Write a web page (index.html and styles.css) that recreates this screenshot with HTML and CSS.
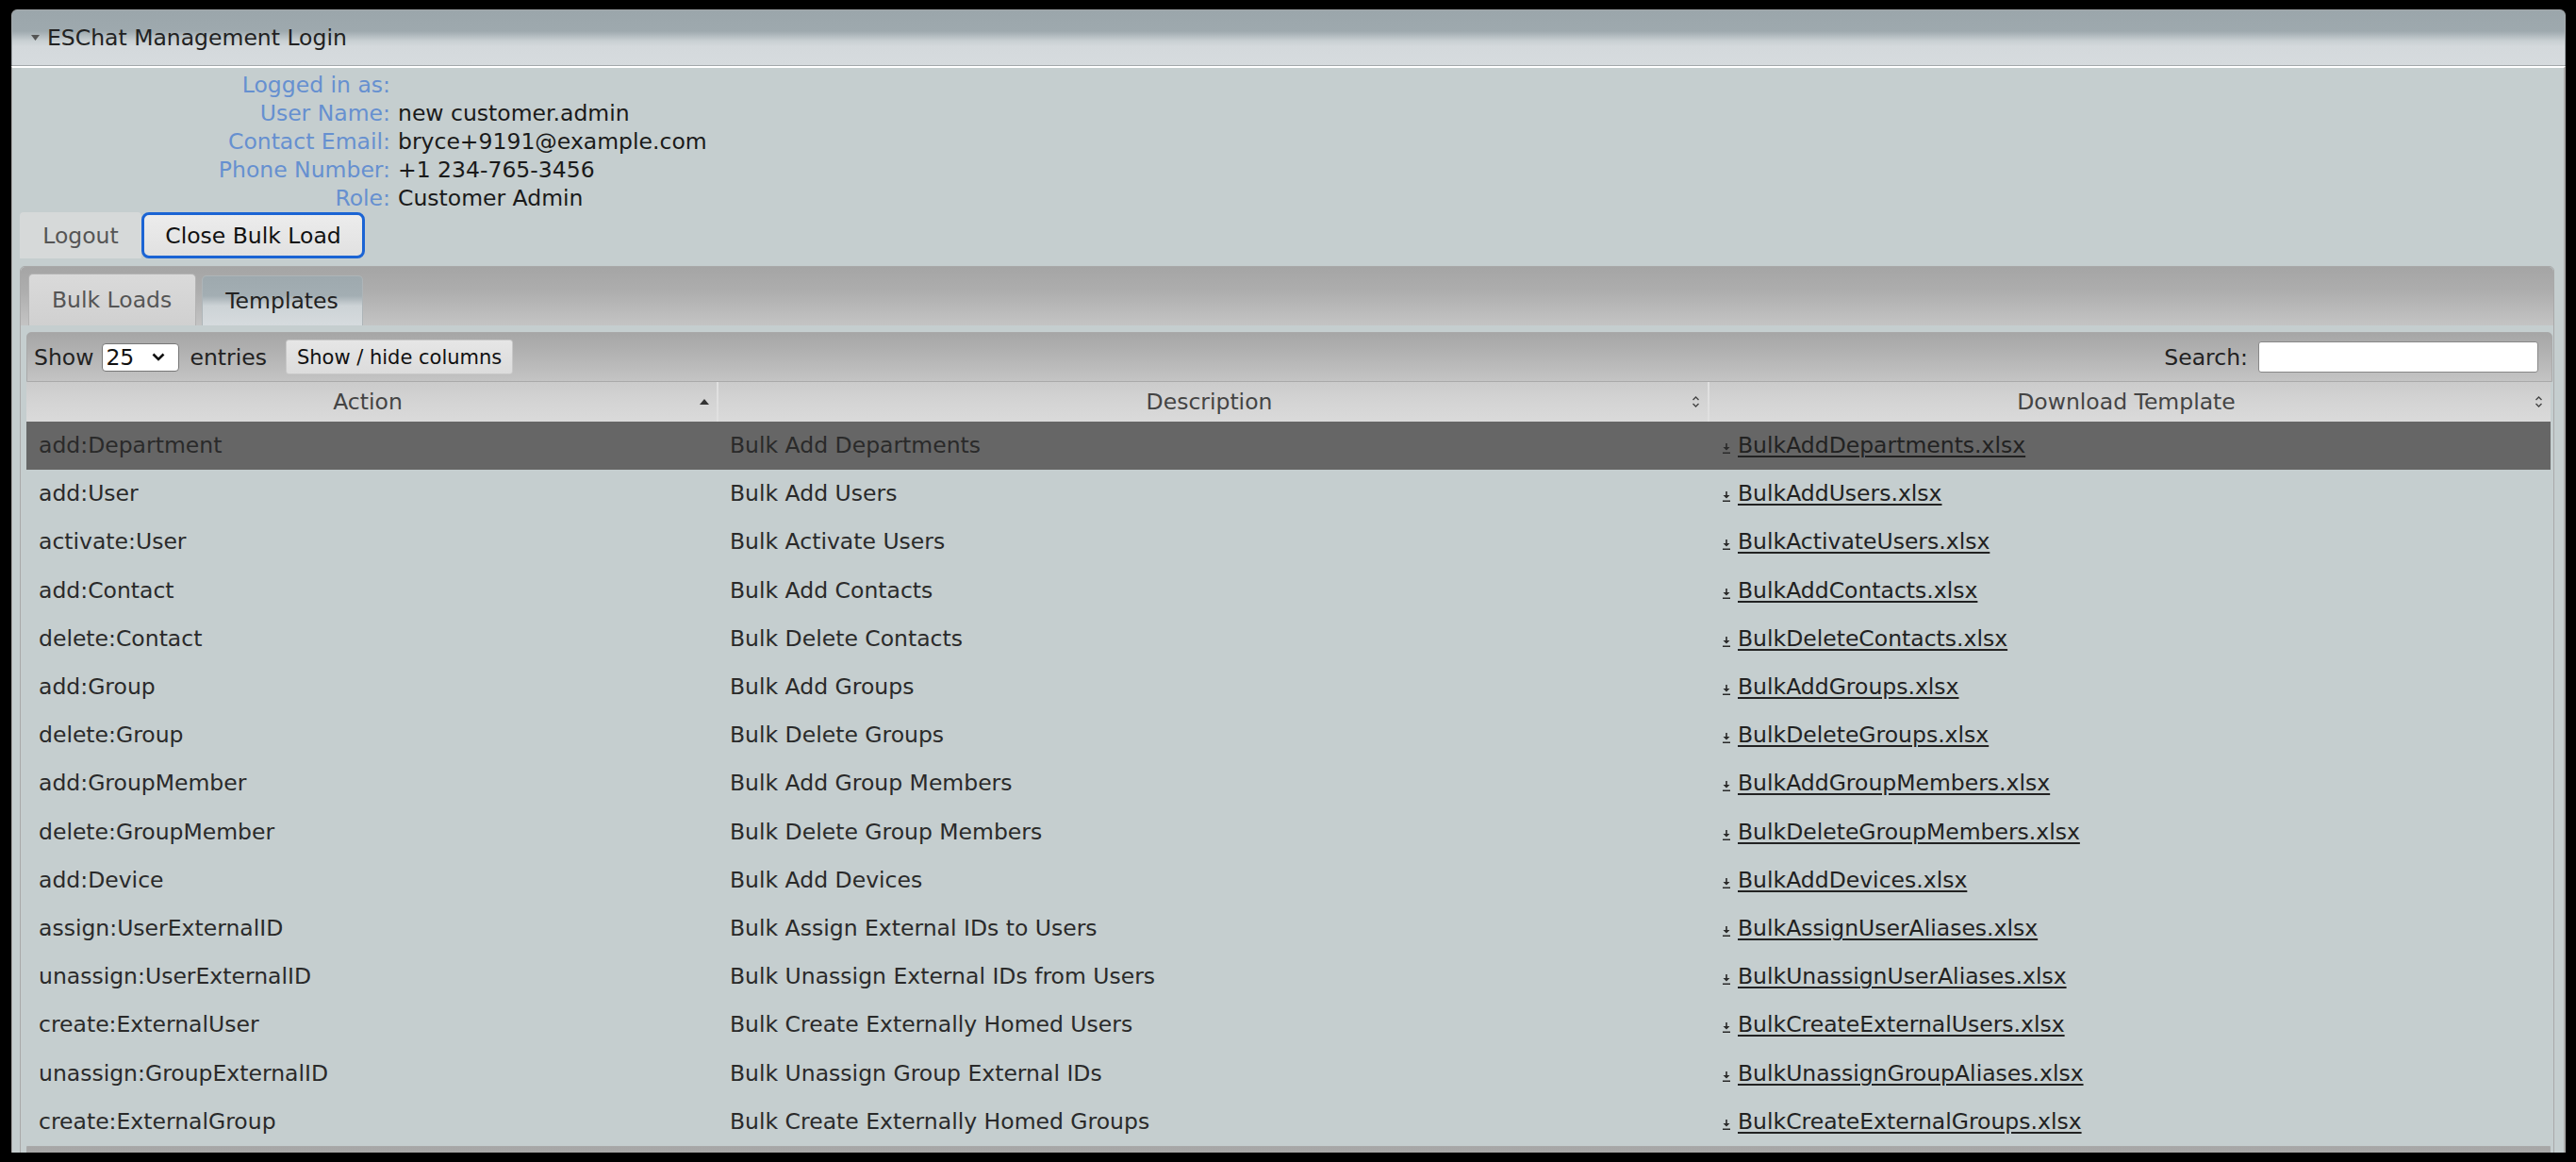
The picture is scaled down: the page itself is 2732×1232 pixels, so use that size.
FILE: index.html
```html
<!DOCTYPE html>
<html lang="en">
<head>
    <meta charset="UTF-8">
    <meta name="viewport" content="width=device-width, initial-scale=1.0">
    <title>ESChat Management - Bulk Load Templates</title>
    <link rel="stylesheet" href="styles.css">
</head>
<body>
    <div class="frame">
        <h3 class="acc-header">
            <svg class="acc-icon" width="9" height="6" viewBox="0 0 9 6"><path d="M0 0H9L4.5 6Z" fill="#555"/></svg>
            ESChat Management Login
        </h3>
        <div class="acc-content">
            <div class="user-info">
                <span class="label">Logged in as:</span><span class="value"></span>
                <span class="label">User Name:</span><span class="value">new customer.admin</span>
                <span class="label">Contact Email:</span><span class="value">bryce+9191@example.com</span>
                <span class="label">Phone Number:</span><span class="value">+1 234-765-3456</span>
                <span class="label">Role:</span><span class="value">Customer Admin</span>
            </div>

            <div class="actions">
                <button class="btn-logout">Logout</button>
                <button class="btn-close">Close Bulk Load</button>
            </div>

            <div class="tabs">
                <ul class="tab-nav">
                    <li class="tab">Bulk Loads</li>
                    <li class="tab active">Templates</li>
                </ul>
                <div class="tab-panel">
                    <div class="toolbar">
                        <div class="length">
                            Show
                            <span class="select-box">
                                <select><option>25</option><option>50</option><option>100</option></select>
                                <svg width="14" height="9" viewBox="0 0 14 9"><path d="M1.5 1.5L7 7L12.5 1.5" fill="none" stroke="#111" stroke-width="2.6"/></svg>
                            </span>
                            entries
                        </div>
                        <button class="btn-colvis">Show / hide columns</button>
                        <div class="search">Search: <input type="text"></div>
                    </div>

                    <table class="templates">
                        <colgroup>
                            <col class="col-action">
                            <col class="col-desc">
                            <col>
                        </colgroup>
                        <thead>
                            <tr>
                                <th><div class="th-inner"><span></span><span>Action</span><svg class="sort" width="10" height="6" viewBox="0 0 10 6"><path d="M5 0L10 6H0Z" fill="#333"/></svg></div></th>
                                <th><div class="th-inner"><span></span><span>Description</span><svg class="sort" width="9" height="14" viewBox="0 0 9 14"><path d="M1.5 5L4.5 2L7.5 5M1.5 9L4.5 12L7.5 9" fill="none" stroke="#444" stroke-width="1.4"/></svg></div></th>
                                <th><div class="th-inner"><span></span><span>Download Template</span><svg class="sort" width="9" height="14" viewBox="0 0 9 14"><path d="M1.5 5L4.5 2L7.5 5M1.5 9L4.5 12L7.5 9" fill="none" stroke="#444" stroke-width="1.4"/></svg></div></th>
                            </tr>
                        </thead>
                        <tbody>
                            <tr class="selected"><td>add:Department</td><td>Bulk Add Departments</td><td><svg class="dl" width="8" height="11" viewBox="0 0 8 11"><path d="M3.2 0H4.8V4H7.5L4 7.6L0.5 4H3.2Z M0 9.4H8V11H0Z" fill="#2a2a2a"/></svg><a href="#">BulkAddDepartments.xlsx</a></td></tr>
                            <tr><td>add:User</td><td>Bulk Add Users</td><td><svg class="dl" width="8" height="11" viewBox="0 0 8 11"><path d="M3.2 0H4.8V4H7.5L4 7.6L0.5 4H3.2Z M0 9.4H8V11H0Z" fill="#2a2a2a"/></svg><a href="#">BulkAddUsers.xlsx</a></td></tr>
                            <tr><td>activate:User</td><td>Bulk Activate Users</td><td><svg class="dl" width="8" height="11" viewBox="0 0 8 11"><path d="M3.2 0H4.8V4H7.5L4 7.6L0.5 4H3.2Z M0 9.4H8V11H0Z" fill="#2a2a2a"/></svg><a href="#">BulkActivateUsers.xlsx</a></td></tr>
                            <tr><td>add:Contact</td><td>Bulk Add Contacts</td><td><svg class="dl" width="8" height="11" viewBox="0 0 8 11"><path d="M3.2 0H4.8V4H7.5L4 7.6L0.5 4H3.2Z M0 9.4H8V11H0Z" fill="#2a2a2a"/></svg><a href="#">BulkAddContacts.xlsx</a></td></tr>
                            <tr><td>delete:Contact</td><td>Bulk Delete Contacts</td><td><svg class="dl" width="8" height="11" viewBox="0 0 8 11"><path d="M3.2 0H4.8V4H7.5L4 7.6L0.5 4H3.2Z M0 9.4H8V11H0Z" fill="#2a2a2a"/></svg><a href="#">BulkDeleteContacts.xlsx</a></td></tr>
                            <tr><td>add:Group</td><td>Bulk Add Groups</td><td><svg class="dl" width="8" height="11" viewBox="0 0 8 11"><path d="M3.2 0H4.8V4H7.5L4 7.6L0.5 4H3.2Z M0 9.4H8V11H0Z" fill="#2a2a2a"/></svg><a href="#">BulkAddGroups.xlsx</a></td></tr>
                            <tr><td>delete:Group</td><td>Bulk Delete Groups</td><td><svg class="dl" width="8" height="11" viewBox="0 0 8 11"><path d="M3.2 0H4.8V4H7.5L4 7.6L0.5 4H3.2Z M0 9.4H8V11H0Z" fill="#2a2a2a"/></svg><a href="#">BulkDeleteGroups.xlsx</a></td></tr>
                            <tr><td>add:GroupMember</td><td>Bulk Add Group Members</td><td><svg class="dl" width="8" height="11" viewBox="0 0 8 11"><path d="M3.2 0H4.8V4H7.5L4 7.6L0.5 4H3.2Z M0 9.4H8V11H0Z" fill="#2a2a2a"/></svg><a href="#">BulkAddGroupMembers.xlsx</a></td></tr>
                            <tr><td>delete:GroupMember</td><td>Bulk Delete Group Members</td><td><svg class="dl" width="8" height="11" viewBox="0 0 8 11"><path d="M3.2 0H4.8V4H7.5L4 7.6L0.5 4H3.2Z M0 9.4H8V11H0Z" fill="#2a2a2a"/></svg><a href="#">BulkDeleteGroupMembers.xlsx</a></td></tr>
                            <tr><td>add:Device</td><td>Bulk Add Devices</td><td><svg class="dl" width="8" height="11" viewBox="0 0 8 11"><path d="M3.2 0H4.8V4H7.5L4 7.6L0.5 4H3.2Z M0 9.4H8V11H0Z" fill="#2a2a2a"/></svg><a href="#">BulkAddDevices.xlsx</a></td></tr>
                            <tr><td>assign:UserExternalID</td><td>Bulk Assign External IDs to Users</td><td><svg class="dl" width="8" height="11" viewBox="0 0 8 11"><path d="M3.2 0H4.8V4H7.5L4 7.6L0.5 4H3.2Z M0 9.4H8V11H0Z" fill="#2a2a2a"/></svg><a href="#">BulkAssignUserAliases.xlsx</a></td></tr>
                            <tr><td>unassign:UserExternalID</td><td>Bulk Unassign External IDs from Users</td><td><svg class="dl" width="8" height="11" viewBox="0 0 8 11"><path d="M3.2 0H4.8V4H7.5L4 7.6L0.5 4H3.2Z M0 9.4H8V11H0Z" fill="#2a2a2a"/></svg><a href="#">BulkUnassignUserAliases.xlsx</a></td></tr>
                            <tr><td>create:ExternalUser</td><td>Bulk Create Externally Homed Users</td><td><svg class="dl" width="8" height="11" viewBox="0 0 8 11"><path d="M3.2 0H4.8V4H7.5L4 7.6L0.5 4H3.2Z M0 9.4H8V11H0Z" fill="#2a2a2a"/></svg><a href="#">BulkCreateExternalUsers.xlsx</a></td></tr>
                            <tr><td>unassign:GroupExternalID</td><td>Bulk Unassign Group External IDs</td><td><svg class="dl" width="8" height="11" viewBox="0 0 8 11"><path d="M3.2 0H4.8V4H7.5L4 7.6L0.5 4H3.2Z M0 9.4H8V11H0Z" fill="#2a2a2a"/></svg><a href="#">BulkUnassignGroupAliases.xlsx</a></td></tr>
                            <tr><td>create:ExternalGroup</td><td>Bulk Create Externally Homed Groups</td><td><svg class="dl" width="8" height="11" viewBox="0 0 8 11"><path d="M3.2 0H4.8V4H7.5L4 7.6L0.5 4H3.2Z M0 9.4H8V11H0Z" fill="#2a2a2a"/></svg><a href="#">BulkCreateExternalGroups.xlsx</a></td></tr>
                        </tbody>
                    </table>
                    <div class="toolbar footer"></div>
                </div>
            </div>
        </div>
    </div>
</body>
</html>
```

FILE: styles.css
```css
html, body {
    margin: 0;
    padding: 0;
}

body {
    background: #000;
    font-family: "DejaVu Sans", Verdana, sans-serif;
    font-size: 23.5px;
    color: #222;
    overflow: hidden;
}

.frame {
    margin: 10px 11px 0 12px;
    height: 1212px;
    display: flex;
    flex-direction: column;
    overflow: hidden;
}

/* accordion header */
.acc-header {
    margin: 0;
    height: 58px;
    flex: none;
    display: flex;
    align-items: center;
    padding-left: 20px;
    border: 1px solid #a3a8ab;
    border-radius: 6px 6px 0 0;
    background: linear-gradient(#9ba6ab 0%, #9ea9ae 38%, #c9d0d3 56%, #d4d9dc 66%, #d6dbde 100%);
    font-size: 23.5px;
    font-weight: normal;
    color: #222;
}

.acc-icon {
    margin-right: 8px;
}

.acc-content {
    flex: 1;
    min-height: 0;
    overflow: hidden;
    background: #c5cecf;
    border-top: 2px solid #fff;
    border-left: 1px solid #a9a9a9;
    border-right: 2px solid #a9a9a9;
    padding: 3px 10px 0 8px;
}

/* logged in block */
.user-info {
    display: grid;
    grid-template-columns: 393px auto;
    column-gap: 8px;
    line-height: 30px;
}

.user-info .label {
    text-align: right;
    color: #6690d0;
}

.user-info .value {
    color: #1a1a1a;
}

.actions {
    display: flex;
    height: 49px;
}

.actions button {
    font-family: inherit;
    font-size: 23.5px;
    margin: 0;
    cursor: pointer;
}

.btn-logout {
    width: 129px;
    padding-right: 6px;
    border: none;
    border-radius: 4px 4px 0 0;
    background: #d6d9d9;
    color: #555;
}

.btn-close {
    width: 237px;
    border: 3px solid #1b64d4;
    border-radius: 8px;
    background: linear-gradient(#ececec, #e1e1e1);
    color: #111;
}

/* tabs */
.tabs {
    margin-top: 8px;
    border: 1px solid #a9a9a9;
    border-radius: 5px 5px 0 0;
    background: #c5cecf;
}

.tab-nav {
    display: flex;
    gap: 6px;
    list-style: none;
    margin: 0;
    padding: 7px 0 0 8px;
    border-radius: 5px 5px 0 0;
    background: linear-gradient(#a5a5a5 0%, #adadad 40%, #c4c4c4 100%);
}

.tab {
    height: 55px;
    box-sizing: border-box;
    padding: 0 25px 0 24px;
    display: flex;
    align-items: center;
    border: 1px solid #b3b3b3;
    border-bottom: none;
    border-radius: 5px 5px 0 0;
    background: linear-gradient(#dadada, #d0d0d0);
    color: #555;
}

.tab.active {
    margin-top: 2px;
    height: 53px;
    border-color: #aeb5b8;
    background: linear-gradient(#9ea9ae 0%, #a3aeb3 40%, #cdd3d6 60%, #d6dbde 100%);
    color: #222;
}

.tab-panel {
    padding: 7px 1px 0 6px;
}

/* datatable toolbar */
.toolbar {
    display: flex;
    align-items: center;
    height: 51px;
    border: 1px solid #a9a9a9;
    border-radius: 5px 5px 0 0;
    padding: 0 14px 0 7px;
    background: linear-gradient(#a6a6a6 0%, #b3b3b3 45%, #c4c4c4 100%);
    color: #222;
}

.toolbar.footer {
    border-radius: 0 0 5px 5px;
    margin-right: 2px;
}

.length {
    display: flex;
    align-items: center;
    gap: 9px;
}

.select-box {
    display: inline-flex;
    align-items: center;
    width: 82px;
    height: 30px;
    box-sizing: border-box;
    margin-right: 2px;
    border: 1px solid #777;
    border-radius: 4px;
    background: #fff;
}

.select-box select {
    appearance: none;
    border: none;
    background: transparent;
    font-family: inherit;
    font-size: 23.5px;
    color: #111;
    width: 52px;
    padding: 0 0 0 3px;
    outline: none;
}

.btn-colvis {
    margin-left: 20px;
    height: 37px;
    padding: 0 11px;
    border: 1px solid #c8c8c8;
    border-radius: 3px;
    background: linear-gradient(#e6e6e6, #dcdcdc);
    font-family: inherit;
    font-size: 21px;
    color: #111;
}

.search {
    margin-left: auto;
    display: flex;
    align-items: center;
    gap: 11px;
}

.search input {
    width: 297px;
    height: 33px;
    box-sizing: border-box;
    border: 1px solid #888;
    border-radius: 3px;
    background: #fff;
    font-family: inherit;
    font-size: 21px;
}

/* template table */
.templates {
    width: 2677px;
    table-layout: fixed;
    border-collapse: collapse;
}

.col-action {
    width: 733px;
}

.col-desc {
    width: 1051px;
}

.templates th {
    height: 42px;
    padding: 0 8px 0 0;
    font-weight: normal;
    color: #444;
    background: linear-gradient(#cbcbcb 0%, #d4d4d4 50%, #dadada 100%);
    border-left: 2px solid #e0e0e0;
}

.templates th:first-child {
    border-left: none;
}

.th-inner {
    display: grid;
    grid-template-columns: 1fr auto 1fr;
    align-items: center;
}

.th-inner .sort {
    justify-self: end;
}

.templates td {
    padding: 11px 13px;
    line-height: 29.2px;
    color: #2a2a2a;
    white-space: nowrap;
}

.templates tr.selected td {
    background: #666;
}

.dl {
    margin: 0 8px 0 2px;
    vertical-align: -1px;
}

.templates a {
    color: #222;
    text-decoration: underline;
    text-decoration-thickness: 2px;
    text-underline-offset: 3px;
}
```
